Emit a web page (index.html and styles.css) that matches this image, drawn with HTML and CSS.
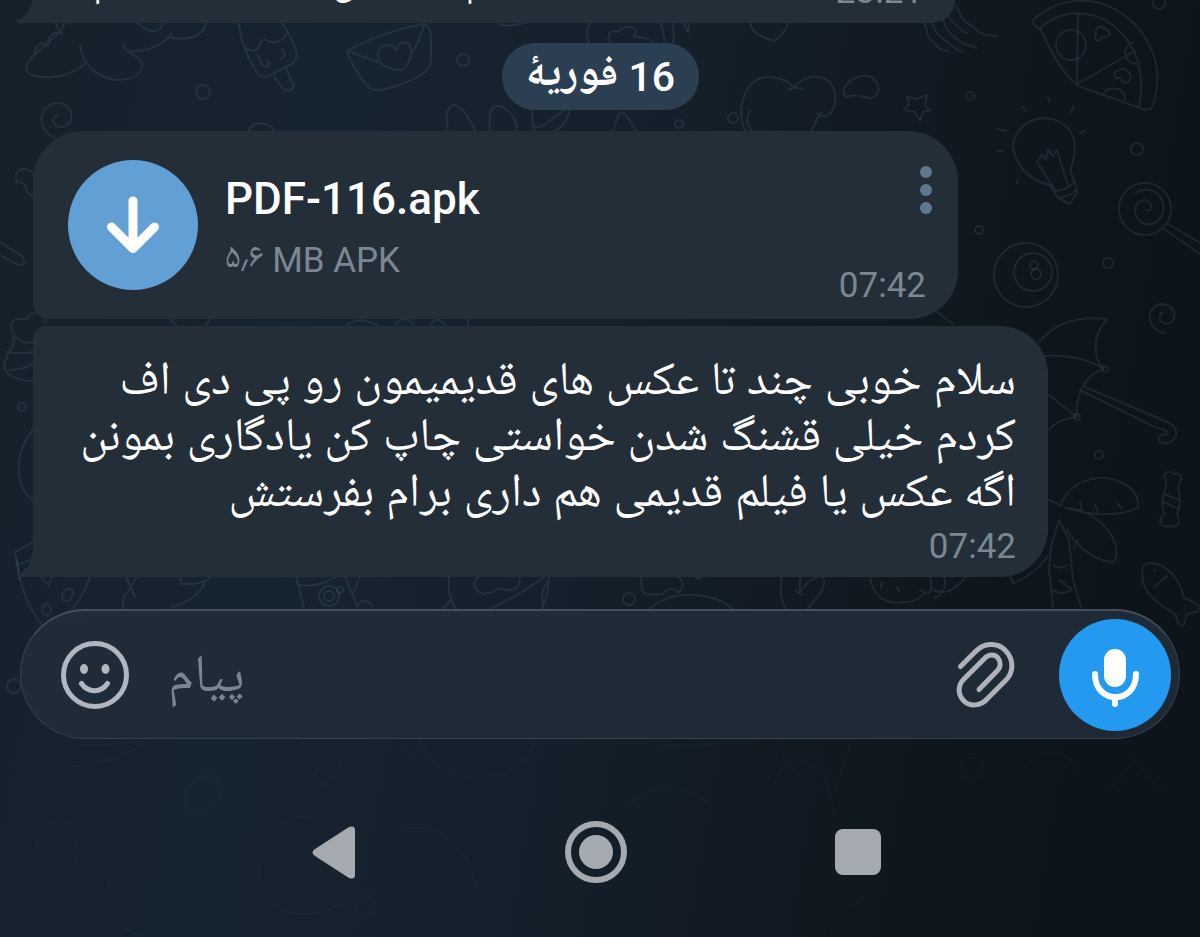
FILE: index.html
```html
<!DOCTYPE html>
<html lang="fa">
<head>
<meta charset="utf-8">
<meta name="viewport" content="width=device-width, initial-scale=1">
<title>پیام</title>
<link rel="stylesheet" href="styles.css">
</head>
<body>
<div class="app">
  <svg class="wallpaper" viewBox="0 0 1200 937" preserveAspectRatio="xMinYMin slice" aria-hidden="true">
    <!-- croc and spiral -->
    <path d="M65 22C62 36 35 50 28 63C20 76 40 78 52 77C68 76 78 70 86 63M80 45C83 70 105 80 118 80C140 80 148 66 138 58C130 52 123 50 123 44M128 51C150 53 165 42 172 34M168 37C190 42 205 35 206 22M137 22C150 35 162 33 163 22M35 54C34 45 44 40 48 46C48 35 55 30 62 34M55 22Q58 30 62 32"/>
    <path d="M55 138C35 130 38 104 58 103C75 104 75 125 62 127C52 127 50 117 58 115M249 130C253 121 268 121 274 130"/>
    <circle cx="203" cy="92" r="7"/><circle cx="463" cy="60" r="6"/>
    <!-- ice cream -->
    <path d="M239 22C240 45 250 62 257 73Q260 78 268 76L292 64Q298 60 296 50C292 38 287 30 281 22M244 46C250 52 255 52 258 48C262 38 264 38 270 42C278 44 285 38 287 34M274 76L282 88Q290 94 294 86L286 68M258 55Q262 68 268 67Q271 62 266 60M282 50Q288 56 281 59"/>
    <!-- envelope -->
    <path d="M347 51C370 38 400 28 424 24Q431 26 431 40V60Q431 68 424 73C410 82 390 90 375 90Q370 90 365 83C355 70 350 62 347 51ZM347 51L378 62M424 24Q420 42 411 54M403 70C385 70 376 62 378 52C382 43 392 43 396 50C400 39 410 41 411 50C412 60 405 68 403 70"/>
    <path d="M448 130C445 115 447 105 455 105C463 107 470 120 475 130M490 130C488 110 492 104 500 106C515 112 517 125 517 130M534 130C530 115 533 105 534 100M534 126C540 132 555 115 570 106M556 130C565 125 570 115 570 106M613 130L619 114Q622 110 626 115L636 130"/>
    <circle cx="679" cy="124" r="4"/><circle cx="733" cy="118" r="5"/>
    <path d="M500 24Q510 28 526 22M590 22Q585 35 589 43M610 43C605 33 612 30 618 32Q625 25 634 28Q638 33 633 36C645 38 653 40 653 43M660 22Q665 35 664 43M672 22Q675 33 673 43M683 22L688 32L690 22M750 22C752 35 765 38 774 41C780 38 787 30 788 22"/>
    <!-- tree -->
    <path d="M745 130C735 110 745 75 770 77C783 78 790 82 794 88C800 78 815 73 827 80C840 90 835 108 830 114C825 118 818 116 817 112M788 90Q795 86 803 89M822 112C815 120 815 125 812 130M750 110Q744 120 751 130M845 97C838 85 860 70 873 78C885 90 875 102 865 97Q855 94 845 97Z"/>
    <path d="M907 97L916 99L927 95L925 106L931 110L923 112L920 121L915 112L904 110L909 104Z"/>
    <circle cx="970" cy="96" r="4"/>
    <path d="M923 22C930 30 924 34 932 41S938 50 948 51M929 20C938 28 932 32 942 38S950 48 963 52M937 15C948 20 942 28 953 36S964 44 977 48M944 8C950 14 948 20 956 25S960 32 967 33M951 0C962 10 958 18 969 24S976 36 997 36"/>
    <!-- pizza -->
    <path d="M1033 20C1055 0 1080-2 1100 3C1140 15 1170 60 1152 107Q1148 112 1140 108L1078 86C1060 70 1050 50 1041 30Q1033 26 1033 20ZM1040 28C1060 10 1085 10 1105 20C1140 40 1145 80 1139 108M1078 13L1077 84L1135 51M1133 42Q1120 50 1128 60Q1133 65 1140 64M1103 96C1105 85 1125 85 1125 100M1096 32Q1096 26 1102 27Q1108 30 1110 33Q1108 38 1102 37Q1098 44 1095 38ZM1116 78Q1112 72 1118 70Q1124 66 1130 74Q1132 80 1127 83Q1122 83 1121 78Z"/>
    <circle cx="1071" cy="45" r="15"/><circle cx="1159" cy="3" r="6"/>
    <!-- light bulb -->
    <path d="M1050 185C1020 178 1008 150 1015 138C1022 118 1045 114 1062 123C1080 135 1075 155 1071 168C1070 178 1078 183 1077 193L1070 204L1062 200C1052 195 1055 190 1050 185ZM1055 190L1037 162L1042 155L1046 160L1048 150L1053 156L1057 150L1068 186M1054 191Q1070 190 1075 180M1058 198Q1072 196 1077 189M1048 97L1050 102M1022 107L1027 111M1074 107L1071 112M997 129L1006 131M1080 133L1085 131M997 151H1003M1018 180L1017 183"/>
    <circle cx="1137" cy="149" r="6"/><circle cx="1108" cy="263" r="5"/><circle cx="979" cy="230" r="4"/>
    <!-- lollipop -->
    <circle cx="1145" cy="209" r="26"/>
    <path d="M1145 210C1152 214 1154 202 1145 200C1132 200 1132 220 1145 224C1160 226 1168 212 1161 198C1156 188 1142 188 1136 193M1168 224L1200 243M1164 229L1200 254"/>
    <!-- billiard ball -->
    <circle cx="1026" cy="275" r="32"/><circle cx="1033" cy="272" r="19"/><circle cx="1034" cy="265" r="4"/><circle cx="1036" cy="274" r="5"/>
    <path d="M1165 333C1145 330 1145 305 1162 304C1180 306 1176 325 1166 324C1158 322 1158 314 1164 312M936 311L953 324"/>
    <!-- umbrella -->
    <path d="M1039 342C1055 322 1080 316 1107 319C1093 335 1092 355 1103 369M1045 356C1070 355 1090 360 1103 369C1085 375 1075 395 1077 417M1049 395L1077 417C1065 418 1055 422 1049 430M1083 386L1165 421Q1178 426 1176 436C1172 446 1156 446 1159 436L1168 434Q1168 430 1155 427L1080 390"/>
    <circle cx="1105" cy="369" r="3"/><circle cx="1077" cy="417" r="3"/><circle cx="1099" cy="455" r="4"/>
    <!-- palm -->
    <path d="M1060 506C1070 480 1100 472 1120 482Q1140 490 1138 508C1115 518 1090 515 1066 508C1095 508 1125 540 1114 562C1095 562 1075 545 1067 530M1049 500L1062 506M1059 520L1051 546L1049 570L1053 607M1059 520L1069 540L1073 580L1081 607M1053 565Q1060 570 1068 565M1051 590Q1062 596 1072 590L1060 580M1080 502L1082 511M1095 505L1098 512M1117 503L1122 509M1041 550Q1030 565 1010 575L1013 583Q1035 575 1048 556M1078 540L1074 548"/>
    <!-- candy and fish -->
    <path d="M1166 480C1160 472 1172 470 1174 474Q1182 472 1181 480L1178 488Q1182 500 1177 515C1182 525 1175 528 1170 526C1160 528 1158 520 1164 514Q1160 500 1166 488ZM1164 494L1179 500M1163 502L1178 508"/>
    <path d="M1144 565C1155 558 1178 570 1184 598C1195 602 1202 606 1197 612Q1188 613 1186 615C1186 628 1178 630 1176 615C1160 605 1135 590 1144 565ZM1154 587L1167 576M1154 570L1155 571"/>
    <!-- left edge -->
    <path d="M33 173C25 165 12 170 17 182Q25 182 26 188Q27 194 33 196M0 242L22 256Q28 264 18 265L0 255M33 342C20 345 12 335 11 325C14 314 25 322 28 318C32 308 45 312 46 322M12 336C22 345 -10 365 12 376Q20 381 33 381M6 352Q20 354 33 352M9 370Q22 370 33 364M33 430C12 455 16 490 33 500M33 542L15 552L20 580M16 565L30 560"/>
    <circle cx="22" cy="407" r="4"/>
    <!-- strip above the message field -->
    <path d="M17 560C20 590 30 610 42 625M90 576Q82 600 70 612M40 576L49 586L52 576M63 600C58 590 73 585 73 592Q72 604 63 600ZM42 611C42 603 48 602 51 608C51 616 44 618 42 611M126 576L135 597M137 576L129 590Q120 600 124 609M180 576L181 584Q205 585 211 576M205 582Q198 600 172 607M296 576L304 608M299 585Q320 588 337 576M345 576L358 608M360 576L354 592M358 605Q365 595 372 606M170 319L176 326M205 326L210 319M347 325Q360 316 377 325M395 325Q405 313 414 325M430 325Q438 315 445 325M468 320V326"/>
    <circle cx="329" cy="596" r="10"/><circle cx="329" cy="596" r="5"/><circle cx="340" cy="590" r="3"/>
    <path d="M449 576Q447 595 456 609M443 609L451 600M549 576Q548 595 542 609M490 609Q525 592 545 576M520 576C520 595 505 590 500 588Q480 600 474 586Q473 578 482 576M543 604Q540 590 548 582M642 576C638 600 650 594 662 594Q672 584 678 593C690 580 675 576 674 576M650 609C670 590 710 590 733 609M695 576Q700 582 701 576M782 576C780 590 780 600 786 609M800 576V592L796 591L802 595M800 592Q812 575 822 577C830 585 815 600 807 609M870 576C872 595 885 606 905 602Q918 602 925 592M882 582L881 588M897 587L899 591M920 590Q935 600 930 576M933 590Q950 598 966 576M944 576Q948 592 935 598"/>
    <circle cx="629" cy="599" r="6"/><circle cx="14" cy="686" r="7"/>
    <!-- fainter shapes behind the navigation area -->
    <g class="faint">
      <path d="M45 750C70 740 90 750 148 740C120 765 60 770 70 764M300 740L325 765M350 740Q345 770 315 790Q310 775 325 762M420 740C435 790 520 790 535 740M400 745L415 760M215 775C190 775 180 790 185 810Q210 820 220 795ZM40 860C30 830 50 815 70 822Q80 840 75 870M280 850C270 820 300 810 318 822M260 860C250 900 290 930 340 905M400 830C440 820 470 850 475 885M660 745Q700 750 730 738M780 740C780 750 790 782 835 790L850 745M775 800C770 760 800 750 825 775L835 815M630 805C650 780 690 785 710 805M1025 775C1030 750 1060 740 1078 770M1110 790L1135 760L1160 790M830 937Q840 900 880 895M110 880C100 910 120 930 140 935"/>
      <circle cx="972" cy="769" r="11"/><circle cx="365" cy="905" r="10"/>
    </g>
  </svg>

  <main class="chat">
    <article class="bubble bubble-previous" dir="ltr">
      <p class="clipped-line" aria-hidden="true"><span>م</span><span class="far">ی</span><span>م</span></p>
      <time class="clipped-time">23:21</time>
    </article>

    <div class="date" dir="rtl">16 <span class="month">فوریهٔ</span></div>

    <article class="bubble bubble-file">
      <button class="download" type="button" aria-label="Download">
        <svg viewBox="0 0 130 130" aria-hidden="true"><path d="M65 41V88M43.500 67L65 88.500L86.500 67"/></svg>
      </button>
      <div class="file-info">
        <h2 class="file-name">PDF-116.apk</h2>
        <p class="file-size"><bdo dir="ltr">۵٫۶</bdo> MB APK</p>
      </div>
      <div class="file-side">
        <button class="more" type="button" aria-label="More">
          <svg viewBox="0 0 14 50" aria-hidden="true"><circle cx="7" cy="7" r="6"/><circle cx="7" cy="25" r="6"/><circle cx="7" cy="43" r="6"/></svg>
        </button>
        <time class="time">07:42</time>
      </div>
    </article>

    <article class="bubble bubble-text">
      <p class="message" dir="rtl">سلام خوبی چند تا عکس های قدیمیمون رو پی دی اف<br>کردم خیلی قشنگ شدن خواستی چاپ کن یادگاری بمونن<br>اگه عکس یا فیلم قدیمی هم داری برام بفرستش</p>
      <time class="time">07:42</time>
    </article>
  </main>

  <form class="composer">
    <button class="tool" type="button" aria-label="Emoji">
      <svg class="emoji" viewBox="0 0 70 70" aria-hidden="true"><circle class="ring" cx="35" cy="35" r="31.500"/><ellipse cx="24" cy="29" rx="4" ry="5"/><ellipse cx="45.500" cy="29" rx="4" ry="5"/><path d="M21.500 43.500C28 53 41 53 47.500 43.500"/></svg>
    </button>
    <input class="field" type="text" aria-label="پیام" placeholder="پیام">
    <button class="tool" type="button" aria-label="Attach">
      <svg class="clip" viewBox="0 0 60 68" aria-hidden="true"><path d="M4.500 25.500L20 10C28 2 41 1 49 9C58 18 58 31 50 39L31 58C25 65 14 66 8 60C1 53 2 44 8 38L29 17C33 13 39 13 42 17C45 21 45 26 41 30L23 48.500"/></svg>
    </button>
    <button class="mic" type="button" aria-label="Voice message">
      <svg viewBox="0 0 112 112" aria-hidden="true"><rect x="45" y="30" width="22" height="38" rx="11"/><path class="cup" d="M36 55C36 86 77 86 77 55"/><path class="stem" d="M56 78V85"/></svg>
    </button>
  </form>

  <nav class="system-nav" aria-label="System">
    <button type="button" aria-label="Back"><svg viewBox="0 0 64 64" aria-hidden="true"><path d="M46 7L12 29Q7 32.500 12 36L46 58Q52 60 52 55V10Q52 5 46 7Z"/></svg></button>
    <button type="button" aria-label="Home"><svg viewBox="0 0 64 64" aria-hidden="true"><circle class="outline" cx="32" cy="32" r="28"/><circle cx="32" cy="32" r="17"/></svg></button>
    <button type="button" aria-label="Recent apps"><svg viewBox="0 0 64 64" aria-hidden="true"><rect x="10" y="9" width="46" height="46" rx="8"/></svg></button>
  </nav>
</div>
</body>
</html>
```
FILE: styles.css
```css
* {
  box-sizing: border-box;
}

body {
  margin: 0;
  background: #0d141b;
  color: #fff;
  font-family: Roboto, "Noto Naskh Arabic UI", "Noto Naskh Arabic", "Noto Sans Arabic", "DejaVu Sans", sans-serif;
}

button {
  padding: 0;
  border: 0;
  background: none;
  color: inherit;
  cursor: pointer;
}

svg {
  display: block;
}

p,
h2 {
  margin: 0;
}

.app {
  position: relative;
  display: flex;
  flex-direction: column;
  min-height: 100vh;
  overflow: hidden;
  background: linear-gradient(100deg, #15202a 0%, #162330 25%, #15202c 48%, #101820 72%, #0d141b 88%);
}

.wallpaper {
  position: absolute;
  inset: 0;
  width: 100%;
  height: 100%;
  fill: none;
  stroke: rgba(125, 160, 185, 0.13);
  stroke-width: 2;
  stroke-linecap: round;
  stroke-linejoin: round;
}

.faint {
  stroke: rgba(125, 160, 185, 0.03);
}

.chat {
  position: relative;
  display: flex;
  flex-direction: column;
  align-items: flex-start;
  padding: 0 152px 0 33px;
}

.bubble {
  position: relative;
  background: #232e39;
}

.bubble-previous {
  display: flex;
  align-items: flex-end;
  justify-content: space-between;
  width: 100%;
  max-width: 922px;
  height: 23px;
  padding: 0 32px 18px 60px;
  border-radius: 0 0 48px 0;
}

.bubble-previous::before,
.bubble-text::before {
  content: "";
  position: absolute;
  right: 100%;
  bottom: 0;
  width: 17px;
  height: 32px;
  background: #232e39;
  clip-path: path("M17 0C17 14 12 26 1 29Q-1 32 4 32H17Z");
}

.clipped-line {
  display: flex;
  gap: 108px;
  font-size: 40px;
  line-height: 40px;
}

.clipped-line .far {
  margin-left: 112px;
}

.clipped-time {
  color: #7b8793;
  font-size: 35px;
  line-height: 26px;
}

.date {
  align-self: center;
  margin: 20px 0 21px;
  padding: 0 24px;
  border-radius: 33px;
  background: #2c3f52;
  font-size: 41px;
  font-weight: 500;
  line-height: 66px;
  translate: 60px 0;
}

.month {
  font-size: 44px;
  font-weight: 700;
}

.bubble-file {
  display: flex;
  gap: 27px;
  width: 100%;
  max-width: 925px;
  min-height: 188px;
  padding: 29px 32px 13px 35px;
  border-radius: 50px 50px 48px 16px;
}

.download {
  flex: none;
  width: 130px;
  height: 130px;
  border-radius: 50%;
  background: #629fd5;
}

.download svg {
  fill: none;
  stroke: #fff;
  stroke-width: 9;
  stroke-linecap: round;
  stroke-linejoin: round;
}

.file-info {
  flex: 1;
  padding-top: 13px;
}

.file-name {
  font-size: 44px;
  font-weight: 500;
  line-height: 52px;
}

.file-size {
  margin-top: 14px;
  color: #7b8793;
  font-size: 35px;
  line-height: 44px;
}

.file-side {
  display: flex;
  flex-direction: column;
  align-items: flex-end;
  justify-content: space-between;
  padding-top: 5px;
}

.more {
  margin-right: -7px;
}

.more svg {
  width: 14px;
  height: 50px;
  fill: #60788f;
}

.time {
  color: #7b8793;
  font-size: 35px;
  line-height: 40px;
}

.bubble-text {
  display: flex;
  flex-direction: column;
  align-items: flex-end;
  min-width: 1015px;
  margin-top: 7px;
  padding: 30px 32px 10px;
  border-radius: 12px 48px 48px 0;
}

.message {
  font-size: 47px;
  line-height: 56px;
  white-space: nowrap;
}

.bubble-text .time {
  margin-top: 3px;
}

.composer {
  position: relative;
  display: flex;
  align-items: center;
  height: 130px;
  margin: 32px 20px 0;
  padding: 0 8px 0 39px;
  border: 1px solid #35414d;
  border-top: 2px solid #43505d;
  border-radius: 65px;
  background: linear-gradient(170deg, #202c3a, #1e2935);
}

.tool {
  flex: none;
}

.emoji {
  width: 70px;
  height: 70px;
  fill: #b0b7c0;
}

.emoji .ring,
.emoji path {
  fill: none;
  stroke: #b0b7c0;
  stroke-width: 5;
  stroke-linecap: round;
}

.field {
  flex: 1;
  min-width: 0;
  height: 100px;
  padding: 10px 38px 0;
  border: 0;
  outline: 0;
  background: none;
  color: #fff;
  font: inherit;
  font-size: 53px;
}

.field::placeholder {
  color: #7b8590;
  opacity: 1;
}

.clip {
  width: 60px;
  height: 68px;
  fill: none;
  stroke: #b0b2ba;
  stroke-width: 5;
  stroke-linecap: round;
  stroke-linejoin: round;
}

.mic {
  flex: none;
  width: 112px;
  height: 112px;
  margin-left: 43px;
  border-radius: 50%;
  background: #2399f0;
}

.mic svg {
  fill: #fff;
}

.mic .cup,
.mic .stem {
  fill: none;
  stroke: #fff;
  stroke-width: 6;
  stroke-linecap: round;
}

.system-nav {
  position: relative;
  display: flex;
  justify-content: center;
  gap: 197px;
  padding: 81px 8px 53px 0;
}

.system-nav svg {
  width: 64px;
  height: 64px;
  fill: #a5aab0;
}

.system-nav .outline {
  fill: none;
  stroke: #a5aab0;
  stroke-width: 6;
}
```
